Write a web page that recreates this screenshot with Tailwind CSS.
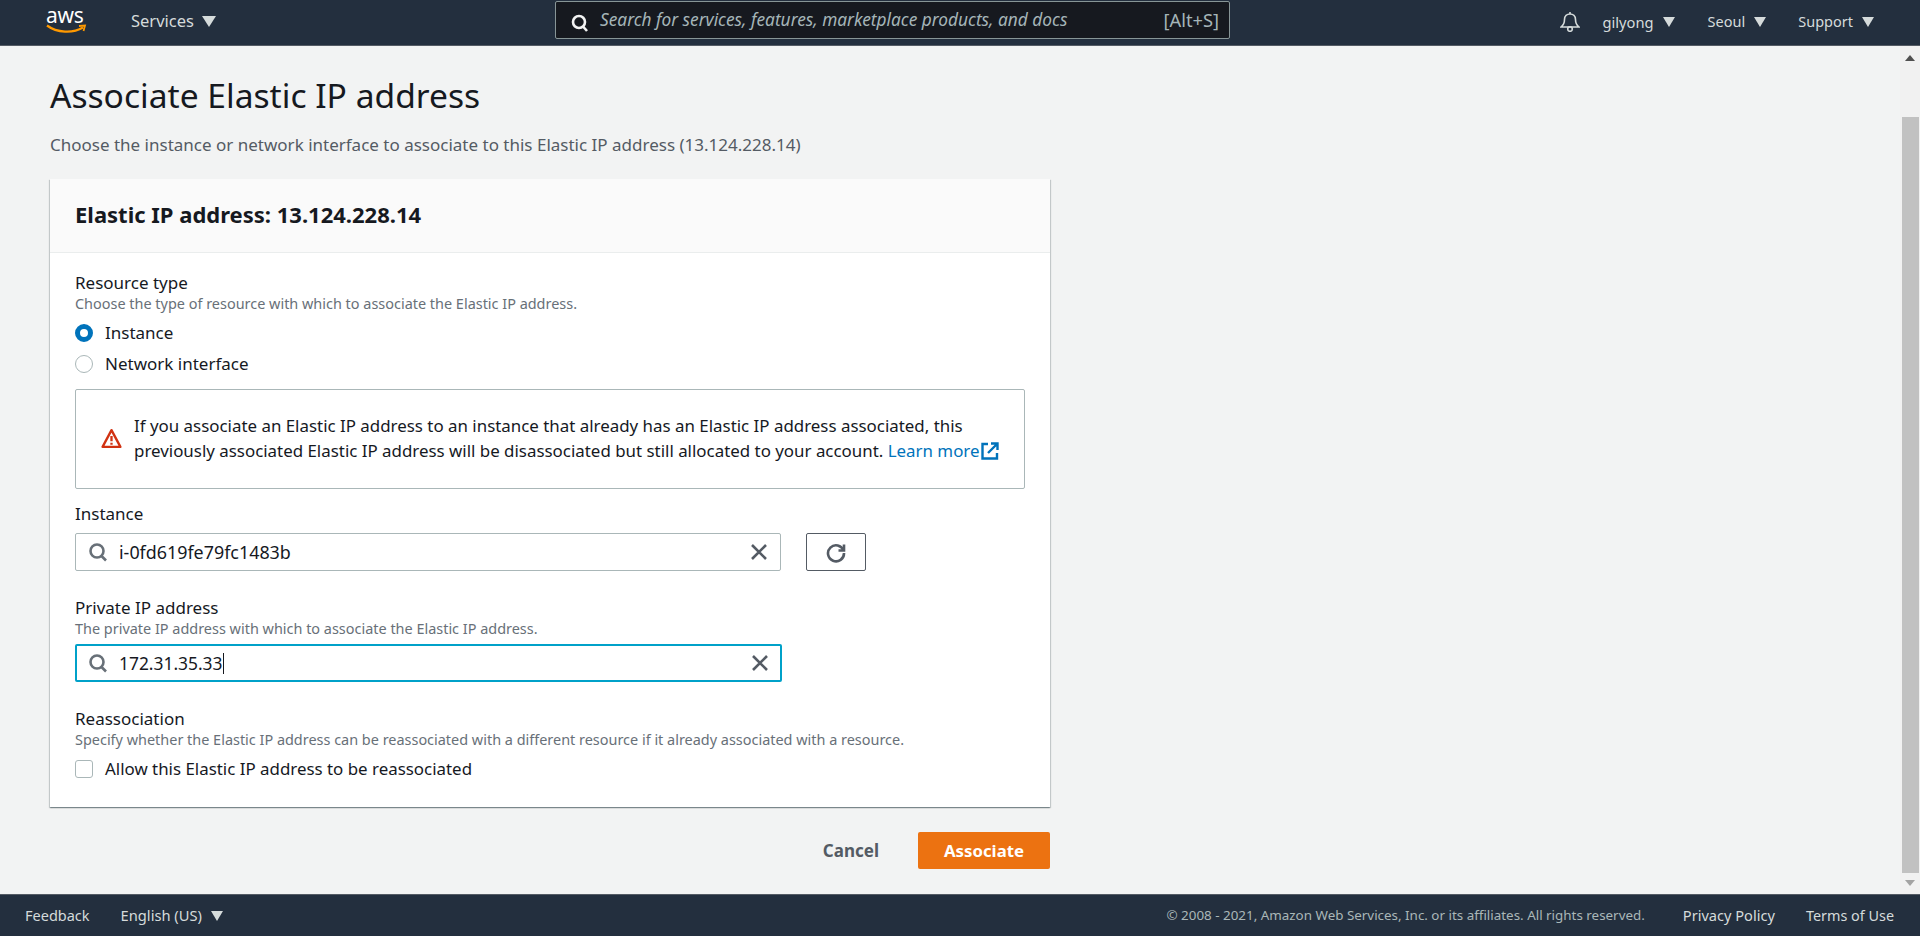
<!DOCTYPE html>
<html lang="en"><head><meta charset="utf-8"><title>Associate Elastic IP address</title>
<script src="https://cdn.jsdelivr.net/npm/@tailwindcss/browser@4"></script></head>
<body class="font-['Noto_Sans','Open_Sans',sans-serif] overflow-hidden">
<div class="h-[936px] flex flex-col bg-[#f2f3f3] text-[#16191f]">
<header class="h-[46px] shrink-0 bg-[#232f3e] border-b border-[#545b64] flex items-center text-[#d5dbdb]">
  <div class="w-[131px] pl-[46px] shrink-0 flex flex-col items-start -mt-[5px]">
    <span class="text-white text-[21px] leading-[18px] tracking-[-0.3px]">aws</span>
    <svg width="42" height="12" viewBox="0 0 42 12" class="-mt-[1px]"><path d="M1 2.500 C11 10 27 10.500 37 4.500" fill="none" stroke="#f90" stroke-width="2.200"/><path d="M33 3 L39 2.500 L37.500 8" fill="none" stroke="#f90" stroke-width="1.800"/></svg>
  </div>
  <div class="w-[424px] shrink-0 flex items-center gap-[8px] text-[16.500px] -mt-[3px]">Services <svg width="14" height="11" viewBox="0 0 14 11"><path d="M0 0H14L7 11Z" fill="#d5dbdb"/></svg></div>
  <div class="w-[675px] h-[38px] shrink-0 bg-[#16191f] border border-[#879596] rounded-[2px] flex items-center pl-[14px] pr-[10px] -mt-[5px]">
    <svg width="20" height="20" viewBox="0 0 20 20" class="mt-[5px]" fill="none" stroke="#f2f3f3" stroke-width="2.600"><circle cx="9" cy="9" r="6"/><path d="M13 13.500 L17 18"/></svg>
    <span class="ml-[10px] italic text-[#a5b5b8] text-[17.300px] flex-1">Search for services, features, marketplace products, and docs</span>
    <span class="text-[#a5b5b8] text-[18.300px]">[Alt+S]</span>
  </div>
  <div class="flex-1"></div>
  <div class="flex items-center pr-[46px] -mt-[1px]">
    <svg width="20" height="21" viewBox="0 0 20 21" class="mr-[23px] -mt-[1px]" fill="none" stroke="#d5dbdb" stroke-width="1.600"><path d="M1 16 C3.500 14 4.500 12 4.500 8.500 C4.500 5 7 3 10 3 C13 3 15.500 5 15.500 8.500 C15.500 12 16.500 14 19 16 Z"/><path d="M10 1V3"/><circle cx="10" cy="18" r="2.300"/></svg>
    <span class="text-[14.700px]">gilyong</span><svg width="12" height="10" viewBox="0 0 12 10" class="ml-[9px]"><path d="M0 0H12L6 10Z" fill="#d5dbdb"/></svg>
    <span class="ml-[33px] text-[14.500px]">Seoul</span><svg width="12" height="10" viewBox="0 0 12 10" class="ml-[9px]"><path d="M0 0H12L6 10Z" fill="#d5dbdb"/></svg>
    <span class="ml-[32px] text-[14.500px]">Support</span><svg width="12" height="10" viewBox="0 0 12 10" class="ml-[9px]"><path d="M0 0H12L6 10Z" fill="#d5dbdb"/></svg>
  </div>
</header>
<div class="flex-1 flex min-h-0">
  <main class="flex-1 pl-[50px] pt-[28px]">
    <div class="w-[1000px]">
      <h1 class="text-[33.600px] leading-[42px] font-normal">Associate Elastic IP address</h1>
      <p class="mt-[18px] text-[17px] leading-[22px] text-[#545b64]">Choose the instance or network interface to associate to this Elastic IP address (13.124.228.14)</p>
      <section class="mt-[23px] bg-white shadow-[0_1px_1px_0_rgba(0,28,36,0.3),1px_1px_1px_0_rgba(0,28,36,0.15),-1px_1px_1px_0_rgba(0,28,36,0.15)] h-[628px]">
        <div class="h-[74px] bg-[#fafafa] border-b border-[#eaeded] px-[25px] pb-[2px] flex items-center font-bold text-[22px]">Elastic IP address: 13.124.228.14</div>
        <div class="px-[25px] pt-[18px]">
          <div class="text-[17px] leading-[23px]">Resource type</div>
          <div class="text-[14.450px] leading-[20px] text-[#687078]">Choose the type of resource with which to associate the Elastic IP address.</div>
          <div class="mt-[3px] h-[31px] flex items-center gap-[12px] text-[17px]"><span class="w-[18px] h-[18px] rounded-full border-[5px] border-[#0073bb] bg-white"></span>Instance</div>
          <div class="h-[31px] flex items-center gap-[12px] text-[17px]"><span class="w-[18px] h-[18px] rounded-full border border-[#aab7b8] bg-white"></span>Network interface</div>
          <div class="mt-[10px] w-[950px] h-[100px] border border-[#aab7b8] rounded-[2px] flex items-center pl-[25px]">
            <svg width="21" height="21" viewBox="0 0 20 20" class="shrink-0 -mt-[2px]" fill="none"><path d="M10 2 L18.500 18 H1.500 Z" stroke="#d13212" stroke-width="2.200" stroke-linejoin="round"/><path d="M10 7.500V12.500M10 14V16" stroke="#d13212" stroke-width="2.200"/></svg>
            <p class="ml-[12px] -mt-[2px] text-[16.900px] leading-[25px]">If you associate an Elastic IP address to an instance that already has an Elastic IP address associated, this<br>previously associated Elastic IP address will be disassociated but still allocated to your account. <span class="text-[#0073bb]">Learn more</span><svg width="18" height="18" viewBox="0 0 18 18" class="inline-block align-[-3px] ml-[1px]" fill="none" stroke="#0073bb" stroke-width="2.400"><path d="M7 2H1.500V16.500H16V11"/><path d="M7 11L16 2M10 1.500H16.500V8"/></svg></p>
          </div>
          <div class="mt-[14px] text-[17px] leading-[22px]">Instance</div>
          <div class="mt-[8px] flex items-center">
            <div class="w-[706px] h-[38px] border border-[#aab7b8] rounded-[2px] flex items-center pl-[12px] pr-[12px]">
              <svg width="20" height="20" viewBox="0 0 20 20" fill="none" stroke="#687078" stroke-width="2.600"><circle cx="9" cy="9" r="6.500"/><path d="M13.500 14 L18 18.500"/></svg>
              <span class="ml-[11px] flex-1 text-[17.900px]">i-0fd619fe79fc1483b</span>
              <svg width="18" height="18" viewBox="0 0 18 18" stroke="#545b64" stroke-width="2.600"><path d="M2 2L16 16M16 2L2 16"/></svg>
            </div>
            <div class="ml-[25px] w-[60px] h-[38px] border border-[#545b64] rounded-[2px] flex items-center justify-center">
              <svg width="22" height="22" viewBox="0 0 22 22" fill="none" stroke="#545b64" stroke-width="2.600"><path d="M18.500 9.500 A8 8 0 1 0 19 12"/><path d="M13.500 9.500H19V3.500"/></svg>
            </div>
          </div>
          <div class="mt-[25px] text-[17px] leading-[23px]">Private IP address</div>
          <div class="text-[14.450px] leading-[20px] text-[#687078]">The private IP address with which to associate the Elastic IP address.</div>
          <div class="mt-[5px] w-[707px] h-[38px] border-2 border-[#00a1c9] rounded-[2px] flex items-center pl-[11px] pr-[11px]">
            <svg width="20" height="20" viewBox="0 0 20 20" fill="none" stroke="#687078" stroke-width="2.600"><circle cx="9" cy="9" r="6.500"/><path d="M13.500 14 L18 18.500"/></svg>
            <span class="ml-[11px] text-[17.400px]">172.31.35.33</span><span class="w-px h-[21px] bg-[#16191f]"></span>
            <span class="flex-1"></span>
            <svg width="18" height="18" viewBox="0 0 18 18" stroke="#545b64" stroke-width="2.600"><path d="M2 2L16 16M16 2L2 16"/></svg>
          </div>
          <div class="mt-[25px] text-[17px] leading-[23px]">Reassociation</div>
          <div class="text-[14.450px] leading-[20px] text-[#687078]">Specify whether the Elastic IP address can be reassociated with a different resource if it already associated with a resource.</div>
          <div class="mt-[8px] flex items-center gap-[12px] text-[16.900px] leading-[22px]"><span class="w-[18px] h-[18px] rounded-[3px] border border-[#aab7b8] bg-white"></span>Allow this Elastic IP address to be reassociated</div>
        </div>
      </section>
      <div class="mt-[25px] flex justify-end items-center">
        <span class="font-bold text-[17px] text-[#545b64] mr-[39px]">Cancel</span>
        <span class="w-[132px] h-[37px] bg-[#ec7211] rounded-[2px] text-white font-bold text-[16.800px] flex items-center justify-center">Associate</span>
      </div>
    </div>
  </main>
  <div class="w-[20px] shrink-0 bg-[#f1f1f1] flex flex-col items-center">
    <div class="h-[71px] shrink-0 pt-[9px]"><svg width="10" height="6" viewBox="0 0 10 6"><path d="M0 6H10L5 0Z" fill="#505050"/></svg></div>
    <div class="w-[17px] ml-[1px] flex-1 bg-[#c1c1c1]"></div>
    <div class="h-[21px] shrink-0 pt-[7px]"><svg width="10" height="6" viewBox="0 0 10 6"><path d="M0 0H10L5 6Z" fill="#a3a3a3"/></svg></div>
  </div>
</div>
<footer class="h-[42px] shrink-0 bg-[#232f3e] border-t border-[#545b64] flex items-center text-[#d5dbdb] text-[14.500px] pl-[25px] pr-[26px]">
  <span>Feedback</span><span class="ml-[31px] text-[14.700px]">English (US)</span><svg width="12" height="10" viewBox="0 0 12 10" class="ml-[9px]"><path d="M0 0H12L6 10Z" fill="#d5dbdb"/></svg>
  <span class="flex-1"></span>
  <span class="text-[13.400px] text-[#aab7b8]">© 2008 - 2021, Amazon Web Services, Inc. or its affiliates. All rights reserved.</span>
  <span class="ml-[38px] text-[14.600px]">Privacy Policy</span><span class="ml-[31px] text-[14.400px]">Terms of Use</span>
</footer>
</div>
</body></html>
